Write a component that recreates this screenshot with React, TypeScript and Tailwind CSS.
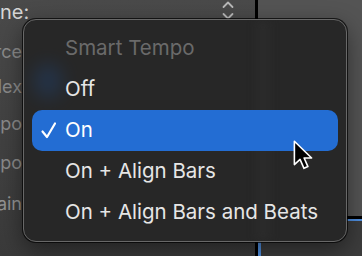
const items = [
  { label: "Off", selected: false },
  { label: "On", selected: true },
  { label: "On + Align Bars", selected: false },
  { label: "On + Align Bars and Beats", selected: false },
];

// what is left visible of the inspector labels beside the popup
const sideLabels = [
  { text: "rce", h: "h-[35px]", tone: "text-[#8a8a8a]" },
  { text: "lex", h: "h-[35px]", tone: "text-[#8a8a8a]" },
  { text: "po", h: "h-[38px]", tone: "text-[#8a8a8a]" },
  { text: "po", h: "h-[41px]", tone: "text-[#8a8a8a]" },
  { text: "ain", h: "h-[40px]", tone: "text-[#939393]" },
];

function Cursor() {
  return (
    <svg width="24" height="32" viewBox="0 0 16 26" className="absolute left-[291px] top-[140px]">
      <path
        d="M1 1 L1 20 L5.6 15.8 L8.8 23 L12 21.6 L8.9 14.6 L15 14.6 Z"
        fill="#000"
        stroke="#fff"
        strokeWidth="1.3"
        strokeLinejoin="round"
      />
    </svg>
  );
}

export default function App() {
  return (
    <div
      className="relative w-[362px] h-[256px] overflow-hidden flex bg-gradient-to-b from-[#4a4a4a] to-[#3a3a3a]"
      style={{ fontFamily: "Inter, 'Noto Sans', sans-serif" }}
    >
      {/* Inspector area behind the popup */}
      <div className="w-[255px] flex flex-col">
        <div className="h-[23px] flex items-center">
          <div className="w-[31px] flex justify-start">
            <span className="text-[20px] text-[#d6d6d6] whitespace-nowrap">ne:</span>
          </div>
          <svg width="14" height="20" viewBox="0 0 14 20" className="ml-[190px] -mt-[4px]" fill="none" stroke="#b8b8b8" strokeWidth="1.8" strokeLinecap="round" strokeLinejoin="round">
            <path d="M2.5 7 L7 2.5 L11.5 7" />
            <path d="M2.5 14 L7 18.5 L11.5 14" />
          </svg>
        </div>
        <div className="flex-1 flex flex-col pt-[11px]">
          {sideLabels.map((l, i) => (
            <div key={i} className={`${l.h} w-[22px] flex justify-end items-center`}>
              <span className={`text-[18px] whitespace-nowrap ${l.tone}`}>{l.text}</span>
            </div>
          ))}
        </div>
      </div>
      <div className="w-[3px] bg-black" />
      {/* Track area on the right */}
      <div className="flex-1 flex flex-col">
        <div className="h-[216px] bg-[#545454]" />
        <div className="h-[3px] bg-black" />
        <div className="h-[2px] bg-[#4f8fe0]" />
        <div className="flex-1 bg-[#3c3c3c] border-l-[3px] border-[#4f8fe0]" />
      </div>

      {/* Popup menu */}
      <div className="absolute left-[23px] top-[19px] w-[324px] h-[223px] rounded-[13px] border border-[#686868] bg-[#272727] shadow-[0_0_0_1px_rgba(0,0,0,0.7),0_8px_24px_rgba(0,0,0,0.45)] overflow-hidden">
        <div className="absolute left-[10px] top-[44px] w-[28px] h-[34px] rounded-full bg-[#1d4f94] opacity-30 blur-[9px]" />
        <div className="absolute left-[232px] top-0 w-[14px] h-full bg-[#2e2e2e] opacity-60 blur-[4px]" />
        <div className="relative flex flex-col px-[8px] pt-[8px]">
          <div className="h-[41px] flex items-center pl-[33px] text-[20.5px] text-[#6a6a6a]">Smart Tempo</div>
          {items.map((it) => (
            <div
              key={it.label}
              className={`h-[41px] flex items-center relative pl-[33px] text-[20.5px] rounded-[10px] ${
                it.selected ? "bg-[#236dd3] text-white" : "text-[#e6e6e6]"
              }`}
            >
              {it.selected && (
                <svg width="18" height="18" viewBox="0 0 18 18" className="absolute left-[8px] top-[11px]" fill="none" stroke="#fff" strokeWidth="2.2" strokeLinecap="round" strokeLinejoin="round">
                  <path d="M2.5 10.5 L7 16 L15 2.5" />
                </svg>
              )}
              {it.label}
            </div>
          ))}
        </div>
      </div>

      <Cursor />
    </div>
  );
}
